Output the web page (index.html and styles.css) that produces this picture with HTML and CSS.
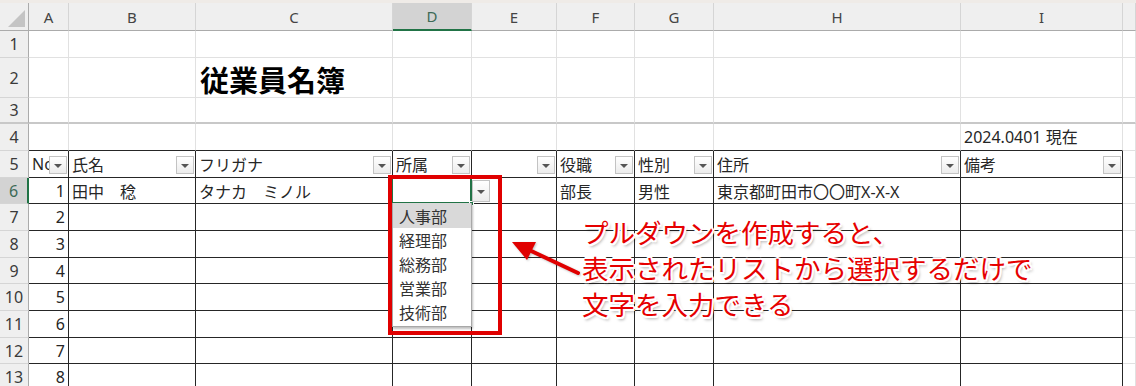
FILE: index.html
```html
<!DOCTYPE html>
<html lang="ja">
<head>
<meta charset="utf-8">
<title>従業員名簿</title>
<link rel="stylesheet" href="styles.css">
</head>
<body>
<div class="sheet">
  <div class="topstrip"></div>
  <div class="row hdr">
    <div class="corner"></div>
    <div class="ch">A</div><div class="ch">B</div><div class="ch">C</div><div class="ch sel">D</div><div class="ch">E</div><div class="ch">F</div><div class="ch">G</div><div class="ch">H</div><div class="ch">I</div><div class="ch"></div>
  </div>
  <div class="row h27">
    <div class="rh">1</div>
    <div class="c"></div><div class="c"></div><div class="c"></div><div class="c"></div><div class="c"></div><div class="c"></div><div class="c"></div><div class="c"></div><div class="c"></div><div class="c j"></div>
  </div>
  <div class="row h40">
    <div class="rh">2</div>
    <div class="c"></div><div class="c"></div><div class="c title">従業員名簿</div><div class="c"></div><div class="c"></div><div class="c"></div><div class="c"></div><div class="c"></div><div class="c"></div><div class="c j"></div>
  </div>
  <div class="row h26 freeze">
    <div class="rh">3</div>
    <div class="c"></div><div class="c"></div><div class="c"></div><div class="c"></div><div class="c"></div><div class="c"></div><div class="c"></div><div class="c"></div><div class="c"></div><div class="c j"></div>
  </div>
  <div class="row h27 top">
    <div class="rh">4</div>
    <div class="c"></div><div class="c"></div><div class="c"></div><div class="c"></div><div class="c"></div><div class="c"></div><div class="c"></div><div class="c"></div><div class="c date">2024.0401 現在</div><div class="c j"></div>
  </div>
  <div class="row h27 t">
    <div class="rh">5</div>
    <div class="c">No<span class="fb"></span></div>
    <div class="c">氏名<span class="fb"></span></div>
    <div class="c">フリガナ<span class="fb"></span></div>
    <div class="c">所属<span class="fb"></span></div>
    <div class="c"><span class="fb"></span></div>
    <div class="c">役職<span class="fb"></span></div>
    <div class="c">性別<span class="fb"></span></div>
    <div class="c">住所<span class="fb"></span></div>
    <div class="c">備考<span class="fb"></span></div>
    <div class="c j"></div>
  </div>
  <div class="row h26 t">
    <div class="rh sel">6</div>
    <div class="c num">1</div><div class="c">田中　稔</div><div class="c">タナカ　ミノル</div><div class="c"></div><div class="c"></div><div class="c">部長</div><div class="c">男性</div><div class="c">東京都町田市〇〇町X-X-X</div><div class="c"></div><div class="c j"></div>
  </div>
  <div class="row h27 t">
    <div class="rh">7</div>
    <div class="c num">2</div><div class="c"></div><div class="c"></div><div class="c"></div><div class="c"></div><div class="c"></div><div class="c"></div><div class="c"></div><div class="c"></div><div class="c j"></div>
  </div>
  <div class="row h27 t">
    <div class="rh">8</div>
    <div class="c num">3</div><div class="c"></div><div class="c"></div><div class="c"></div><div class="c"></div><div class="c"></div><div class="c"></div><div class="c"></div><div class="c"></div><div class="c j"></div>
  </div>
  <div class="row h26 t">
    <div class="rh">9</div>
    <div class="c num">4</div><div class="c"></div><div class="c"></div><div class="c"></div><div class="c"></div><div class="c"></div><div class="c"></div><div class="c"></div><div class="c"></div><div class="c j"></div>
  </div>
  <div class="row h27 t">
    <div class="rh">10</div>
    <div class="c num">5</div><div class="c"></div><div class="c"></div><div class="c"></div><div class="c"></div><div class="c"></div><div class="c"></div><div class="c"></div><div class="c"></div><div class="c j"></div>
  </div>
  <div class="row h27 t">
    <div class="rh">11</div>
    <div class="c num">6</div><div class="c"></div><div class="c"></div><div class="c"></div><div class="c"></div><div class="c"></div><div class="c"></div><div class="c"></div><div class="c"></div><div class="c j"></div>
  </div>
  <div class="row h26 t">
    <div class="rh">12</div>
    <div class="c num">7</div><div class="c"></div><div class="c"></div><div class="c"></div><div class="c"></div><div class="c"></div><div class="c"></div><div class="c"></div><div class="c"></div><div class="c j"></div>
  </div>
  <div class="row h27 t">
    <div class="rh">13</div>
    <div class="c num">8</div><div class="c"></div><div class="c"></div><div class="c"></div><div class="c"></div><div class="c"></div><div class="c"></div><div class="c"></div><div class="c"></div><div class="c j"></div>
  </div>

  <div class="active"><span class="handle"></span></div>
  <div class="ddbtn"></div>
  <ul class="ddlist">
    <li class="hi">人事部</li>
    <li>経理部</li>
    <li>総務部</li>
    <li>営業部</li>
    <li>技術部</li>
  </ul>
  <div class="redbox"></div>
  <svg class="arrow" width="80" height="48" viewBox="0 0 80 48">
    <line x1="73" y1="41" x2="22" y2="17" stroke="#e00000" stroke-width="4" stroke-linecap="round"/>
    <polygon points="7,10 31,10 22,28" fill="#e00000"/>
  </svg>
  <div class="note">
    <div>プルダウンを作成すると、</div>
    <div>表示されたリストから選択するだけで</div>
    <div>文字を入力できる</div>
  </div>
</div>
</body>
</html>
```

FILE: styles.css
```css
* { box-sizing: border-box; }
html, body { margin: 0; padding: 0; background: #fff; }
body {
  font-family: "Noto Sans", "Noto Sans CJK JP", sans-serif;
  width: 1136px;
  height: 386px;
  overflow: hidden;
}
.sheet {
  position: relative;
  width: 1136px;
  height: 386px;
  overflow: hidden;
  background: #fff;
}
.topstrip { height: 3px; background: #efebe7; }

.row {
  display: grid;
  grid-template-columns: 29px 40px 127px 197px 79px 85px 78px 79px 247px 162px 1fr;
}
.hdr { height: 28px; }
.h27 { height: 27px; }
.h26 { height: 26px; }
.h40 { height: 40px; }

.corner {
  position: relative;
  background: #efefef;
  border-right: 1px solid #ababab;
  border-bottom: 1px solid #ababab;
}
.corner::after {
  content: "";
  position: absolute;
  right: 3px;
  bottom: 3px;
  width: 0;
  height: 0;
  border-left: 17px solid transparent;
  border-bottom: 17px solid #c4c4c4;
}
.ch {
  background: #efefef;
  border-right: 1px solid #d5d5d5;
  border-bottom: 1px solid #ababab;
  display: flex;
  align-items: center;
  justify-content: center;
  font-family: "Noto Sans", "Open Sans", sans-serif;
  font-size: 15px;
  color: #444;
}
.ch.sel {
  background: #d3d3d3;
  border-bottom: 2px solid #217346;
  color: #3d6a57;
}

.rh {
  background: #efefef;
  border-right: 1px solid #ababab;
  border-bottom: 1px solid #d5d5d5;
  display: flex;
  align-items: center;
  justify-content: center;
  font-family: "Noto Sans", "Open Sans", sans-serif;
  font-size: 16px;
  color: #3a3a3a;
}
.rh.sel {
  background: #d3d3d3;
  border-right: 2px solid #217346;
  color: #3d6a57;
}

.c {
  position: relative;
  border-right: 1px solid #e1e1e1;
  border-bottom: 1px solid #e1e1e1;
  display: flex;
  align-items: center;
  padding: 0 3px;
  white-space: nowrap;
  overflow: hidden;
  font-size: 16px;
  color: #262626;
}
.freeze .c, .freeze .rh { border-bottom: 2px solid #c8c8c8; }
.top .c:not(.j) { border-bottom-color: #262626; }
.t .c:not(.j) { border-right-color: #262626; border-bottom-color: #262626; }

.num { justify-content: flex-end; }
.title {
  font-family: "Noto Sans CJK JP", sans-serif;
  font-size: 29px;
  font-weight: 700;
  color: #000;
  padding-left: 4px;
  padding-top: 2px;
}
.date { padding-bottom: 2px; }

.fb {
  position: absolute;
  right: 1px;
  bottom: 3px;
  width: 18px;
  height: 18px;
  border: 1px solid #c3c3c3;
  background: linear-gradient(#ffffff, #ececec);
}
.fb::after {
  content: "";
  position: absolute;
  left: 4px;
  top: 7px;
  width: 0;
  height: 0;
  border-left: 4px solid transparent;
  border-right: 4px solid transparent;
  border-top: 4px solid #555;
}

.active {
  position: absolute;
  left: 391px;
  top: 176px;
  width: 81px;
  height: 28px;
  border: 2px solid #217346;
}
.handle {
  position: absolute;
  right: -4px;
  bottom: -4px;
  width: 5px;
  height: 5px;
  background: #217346;
  border: 1px solid #fff;
}
.ddbtn {
  position: absolute;
  left: 472px;
  top: 180px;
  width: 18px;
  height: 22px;
  border: 1px solid #c3c3c3;
  background: linear-gradient(#ffffff, #ececec);
}
.ddbtn::after {
  content: "";
  position: absolute;
  left: 4px;
  top: 9px;
  width: 0;
  height: 0;
  border-left: 4px solid transparent;
  border-right: 4px solid transparent;
  border-top: 4px solid #555;
}
.ddlist {
  position: absolute;
  left: 392px;
  top: 203px;
  width: 80px;
  margin: 0;
  padding: 0 0 2px 0;
  list-style: none;
  background: #fff;
  border: 1px solid #a8a8a8;
  border-top: none;
  box-shadow: 1px 2px 2px rgba(0, 0, 0, 0.25);
  font-family: "Noto Sans CJK JP", sans-serif;
}
.ddlist li {
  height: 24px;
  line-height: 24px;
  padding-left: 6px;
  font-size: 16px;
  color: #333;
}
.ddlist li.hi { background: #d9d9d9; height: 25px; line-height: 26px; }

.redbox {
  position: absolute;
  left: 388px;
  top: 175px;
  width: 114px;
  height: 160px;
  border: 4px solid #e00000;
}
.arrow {
  position: absolute;
  left: 505px;
  top: 232px;
  filter: drop-shadow(1px 1px 1px rgba(0, 0, 0, 0.25));
}
.note {
  position: absolute;
  left: 582px;
  top: 214px;
  font-family: "Noto Sans CJK JP", sans-serif;
  font-size: 26.5px;
  line-height: 36px;
  color: #e60000;
  white-space: nowrap;
  text-shadow:
    -2px 0 0 #fff, 2px 0 0 #fff, 0 -2px 0 #fff, 0 2px 0 #fff,
    -1.5px -1.5px 0 #fff, 1.5px -1.5px 0 #fff, -1.5px 1.5px 0 #fff, 1.5px 1.5px 0 #fff,
    2px 3px 3px rgba(0, 0, 0, 0.35);
}
```
